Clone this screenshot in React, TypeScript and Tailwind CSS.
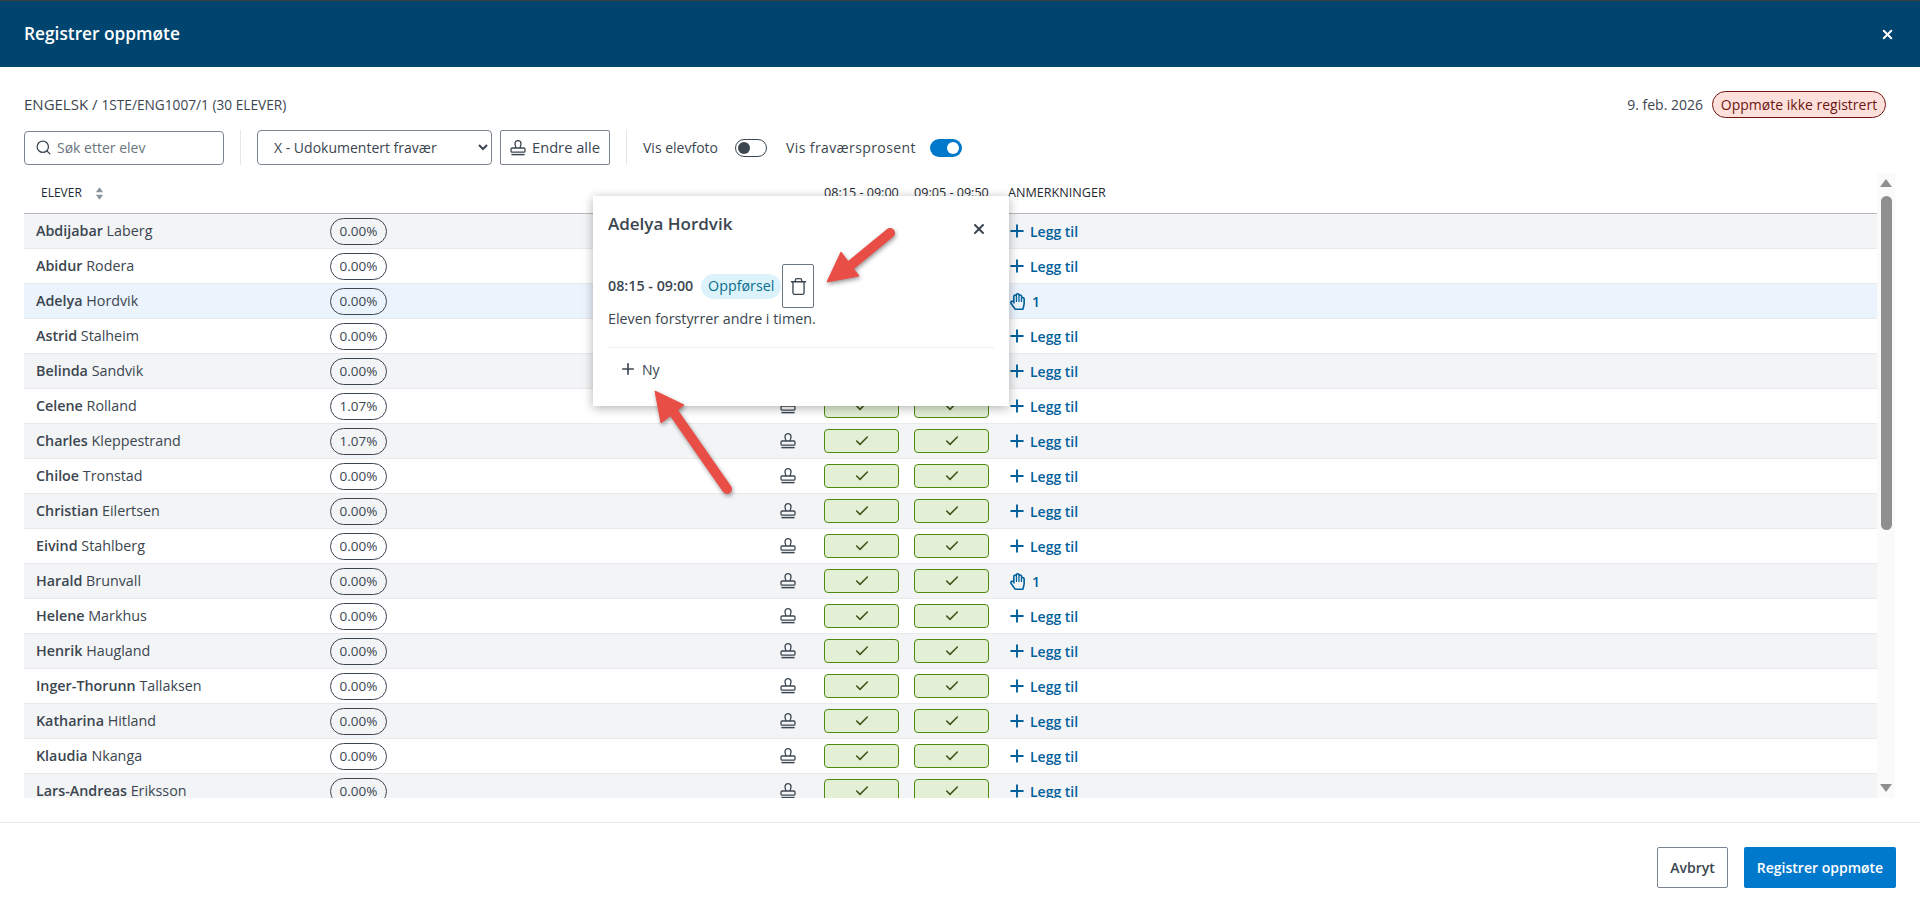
import { Search, Plus, X, Check, Trash } from "lucide-react";
import { FaRegHandPaper } from "react-icons/fa";

const students = [
  { first: "Abdijabar", last: "Laberg", pct: "0.00%" },
  { first: "Abidur", last: "Rodera", pct: "0.00%" },
  { first: "Adelya", last: "Hordvik", pct: "0.00%", notes: 1, active: true },
  { first: "Astrid", last: "Stalheim", pct: "0.00%" },
  { first: "Belinda", last: "Sandvik", pct: "0.00%" },
  { first: "Celene", last: "Rolland", pct: "1.07%" },
  { first: "Charles", last: "Kleppestrand", pct: "1.07%" },
  { first: "Chiloe", last: "Tronstad", pct: "0.00%" },
  { first: "Christian", last: "Eilertsen", pct: "0.00%" },
  { first: "Eivind", last: "Stahlberg", pct: "0.00%" },
  { first: "Harald", last: "Brunvall", pct: "0.00%", notes: 1 },
  { first: "Helene", last: "Markhus", pct: "0.00%" },
  { first: "Henrik", last: "Haugland", pct: "0.00%" },
  { first: "Inger-Thorunn", last: "Tallaksen", pct: "0.00%" },
  { first: "Katharina", last: "Hitland", pct: "0.00%" },
  { first: "Klaudia", last: "Nkanga", pct: "0.00%" },
  { first: "Lars-Andreas", last: "Eriksson", pct: "0.00%" },
];

function StampIcon({ className }: { className?: string }) {
  return (
    <svg viewBox="0 0 16 16" fill="none" stroke="currentColor" strokeWidth="1.3" className={className}>
      <path d="M5.8 8C5.8 6.4 5 5.4 5 3.7a3 3 0 1 1 6 0C11 5.4 10.2 6.4 10.2 8" />
      <rect x="1" y="8" width="14" height="4.2" rx="1.2" />
      <path d="M1.4 14.6h13.2" strokeWidth="1.5" />
    </svg>
  );
}

function Toggle({ on }: { on?: boolean }) {
  return on ? (
    <div className="flex h-[18px] w-[32px] items-center justify-end rounded-full bg-[#0078cc] pr-[3px]">
      <div className="h-[12px] w-[12px] rounded-full bg-white" />
    </div>
  ) : (
    <div className="flex h-[18px] w-[32px] items-center rounded-full border border-[#3b4650] pl-[2px]">
      <div className="h-[12px] w-[12px] rounded-full bg-[#3b4650]" />
    </div>
  );
}

function PresentCell() {
  return (
    <div className="flex h-[24px] w-[75px] items-center justify-center rounded-[4px] border border-[#4f8a10] bg-[#e4f0d6]">
      <Check size={16} strokeWidth={2.4} className="text-[#44561c]" />
    </div>
  );
}

function Row({ s, index }: { s: (typeof students)[number]; index: number }) {
  const bg = s.active ? "bg-[#ebf3fc]" : index % 2 === 0 ? "bg-[#f3f4f6]" : "bg-white";
  return (
    <div className={`flex h-[35px] shrink-0 items-center border-b border-[#e8eaed] ${bg}`}>
      <div className="w-[306px] pb-[1px] pl-3 text-[14.3px] text-[#3b4650]">
        <span className="font-semibold">{s.first}</span> {s.last}
      </div>
      <div className="w-[450px]">
        <span className="flex h-[27px] w-[57px] items-center justify-center rounded-full border border-[#3b4650] text-[13.5px] text-[#3b4650]">
          {s.pct}
        </span>
      </div>
      <div className="w-[44px]">
        <StampIcon className="h-4 w-4 text-[#3b4650]" />
      </div>
      <div className="w-[90px]">
        <PresentCell />
      </div>
      <div className="w-[90px]">
        <PresentCell />
      </div>
      <div className="flex flex-1 items-center pl-[3px] text-[14px] font-semibold text-[#00609c]">
        {s.notes ? (
          <>
            <FaRegHandPaper size={17} className="ml-[2px]" />
            <span className="ml-[6px]">{s.notes}</span>
          </>
        ) : (
          <>
            <Plus size={20} strokeWidth={2.3} />
            <span className="ml-[3px]">Legg til</span>
          </>
        )}
      </div>
    </div>
  );
}

function Scrollbar() {
  return (
    <div className="flex h-[625px] w-[18px] flex-col items-center bg-[#fafafa]">
      <svg viewBox="0 0 12 8" className="mt-[6px] h-[8px] w-[12px] fill-[#8f8f8f]">
        <path d="M6 0l6 8H0z" />
      </svg>
      <div className="mt-[9px] h-[334px] w-[11px] rounded-full bg-[#8f8f8f]" />
      <svg viewBox="0 0 12 8" className="mt-auto mb-[6px] h-[8px] w-[12px] fill-[#8f8f8f]">
        <path d="M6 8l6-8H0z" />
      </svg>
    </div>
  );
}

function NotePopover() {
  return (
    <div className="absolute top-[196px] left-[593px] h-[210px] w-[416px] bg-white px-[15px] text-[#3b4650] shadow-[0_2px_10px_rgba(0,0,0,0.3)]">
      <div className="flex items-center justify-between pt-[15px] pr-[7px]">
        <h2 className="text-[17px] leading-[26px] font-semibold">Adelya Hordvik</h2>
        <X size={16} strokeWidth={3} className="mt-[10px]" />
      </div>
      <div className="mt-[27px] flex h-[44px] items-center">
        <span className="text-[14.3px] font-semibold">08:15 - 09:00</span>
        <span className="ml-[8px] flex h-[25px] w-[80px] items-center justify-center rounded-full bg-[#dcf3fb] text-[14.3px] text-[#0b6e8f]">
          Oppførsel
        </span>
        <div className="ml-[1px] flex h-[44px] w-[32px] items-center justify-center rounded-[2px] border border-[#6b7780]">
          <Trash size={19} strokeWidth={1.7} />
        </div>
      </div>
      <p className="mt-[1px] text-[14.3px] leading-[20px]">Eleven forstyrrer andre i timen.</p>
      <div className="mt-[18px] flex h-[44px] items-center gap-[5px] border-t border-[#eceef0] pb-[1px] pl-[11px] text-[14px] font-medium">
        <Plus size={18} strokeWidth={2.2} />
        <span>Ny</span>
      </div>
    </div>
  );
}

function Arrows() {
  return (
    <svg className="pointer-events-none absolute inset-0 h-[912px] w-[1920px] drop-shadow-[1px_2px_2px_rgba(0,0,0,0.4)]" viewBox="0 0 1920 912">
      <g fill="#e94e46" stroke="#e94e46">
        <path d="M890 233L845 270" strokeWidth="10" strokeLinecap="round" />
        <path d="M827 282L841 252L859 276z" strokeWidth="1" />
        <path d="M727 489L672 410" strokeWidth="10" strokeLinecap="round" />
        <path d="M655 391L684 405L661 423z" strokeWidth="1" />
      </g>
    </svg>
  );
}

export default function App() {
  return (
    <div className="relative flex h-[912px] flex-col overflow-hidden bg-white font-['Open_Sans',sans-serif] text-[#3b4650]">
      <header className="flex h-[67px] shrink-0 items-center justify-between border-t border-[#3a3f42] bg-[#00456f] pr-[25px] pl-[24px] text-white">
        <h1 className="text-[17.3px] font-semibold">Registrer oppmøte</h1>
        <X size={15} strokeWidth={3.2} />
      </header>

      <div className="pt-[24px] pr-[25px] pl-[24px]">
        <div className="flex h-[27px] items-center justify-between pr-[9px]">
          <div className="text-[15px] text-[#3b4650]">
            ENGELSK / <span className="text-[13.7px]">1STE/ENG1007/1 (30 ELEVER)</span>
          </div>
          <div className="flex items-center gap-[9px]">
            <span className="text-[14px]">9. feb. 2026</span>
            <span className="flex h-[27px] w-[174px] items-center justify-center rounded-full border border-[#6e1510] bg-[#fde0dc] text-[14px] text-[#6e1510]">
              Oppmøte ikke registrert
            </span>
          </div>
        </div>

        <div className="mt-[12px] flex h-[35px] items-center text-[14px]">
          <div className="flex h-[34px] w-[200px] items-center gap-[5px] rounded-[4px] border border-[#7a858f] pl-[10px]">
            <Search size={17} strokeWidth={1.8} />
            <input placeholder="Søk etter elev" className="w-[150px] text-[14px] outline-none placeholder:text-[#6b7680]" />
          </div>
          <div className="mx-[16px] h-[35px] w-px bg-[#e5e7eb]" />
          <select className="h-[35px] w-[235px] rounded-[4px] border border-[#7a858f] bg-white pl-[12px] text-[14px]">
            <option>X - Udokumentert fravær</option>
          </select>
          <button className="ml-[8px] flex h-[35px] w-[110px] items-center justify-center gap-[6px] rounded-[2px] border border-[#7a858f] text-[14.7px] font-medium">
            <StampIcon className="h-4 w-4" />
            Endre alle
          </button>
          <div className="mx-[16px] h-[35px] w-px bg-[#e5e7eb]" />
          <span className="w-[76px] whitespace-nowrap">Vis elevfoto</span>
          <div className="ml-[16px]">
            <Toggle />
          </div>
          <span className="ml-[19px] w-[132px] whitespace-nowrap tracking-[0.4px]">Vis fraværsprosent</span>
          <div className="ml-[12px]">
            <Toggle on />
          </div>
        </div>

        <div className="mt-[8px] flex">
          <div className="flex-1">
            <div className="flex h-[41px] items-center border-b border-[#b5bac0] text-[12.6px] font-medium text-[#1f2a33]">
              <div className="flex w-[306px] items-center gap-[13px] pl-[17px] text-[12px]">
                ELEVER
                <svg viewBox="0 0 10 14" className="h-[13px] w-[9px] fill-[#8a949e]">
                  <path d="M5 0l4 5.5H1zM5 14l4-5.5H1z" />
                </svg>
              </div>
              <div className="w-[494px]" />
              <div className="w-[90px] whitespace-nowrap">08:15 - 09:00</div>
              <div className="w-[94px] whitespace-nowrap">09:05 - 09:50</div>
              <div>ANMERKNINGER</div>
            </div>
            <div className="flex h-[584px] flex-col overflow-hidden">
              {students.map((s, i) => (
                <Row key={s.first} s={s} index={i} />
              ))}
            </div>
          </div>
          <Scrollbar />
        </div>
      </div>

      <footer className="mt-[24px] flex flex-1 items-start justify-end gap-[16px] border-t border-[#e8eaed] pt-[24px] pr-[24px] text-[14px] font-semibold">
        <button className="h-[41px] w-[71px] rounded-[2px] border border-[#7a858f]">Avbryt</button>
        <button className="h-[41px] w-[152px] rounded-[2px] bg-[#0078cc] text-white">Registrer oppmøte</button>
      </footer>

      <NotePopover />
      <Arrows />
    </div>
  );
}
